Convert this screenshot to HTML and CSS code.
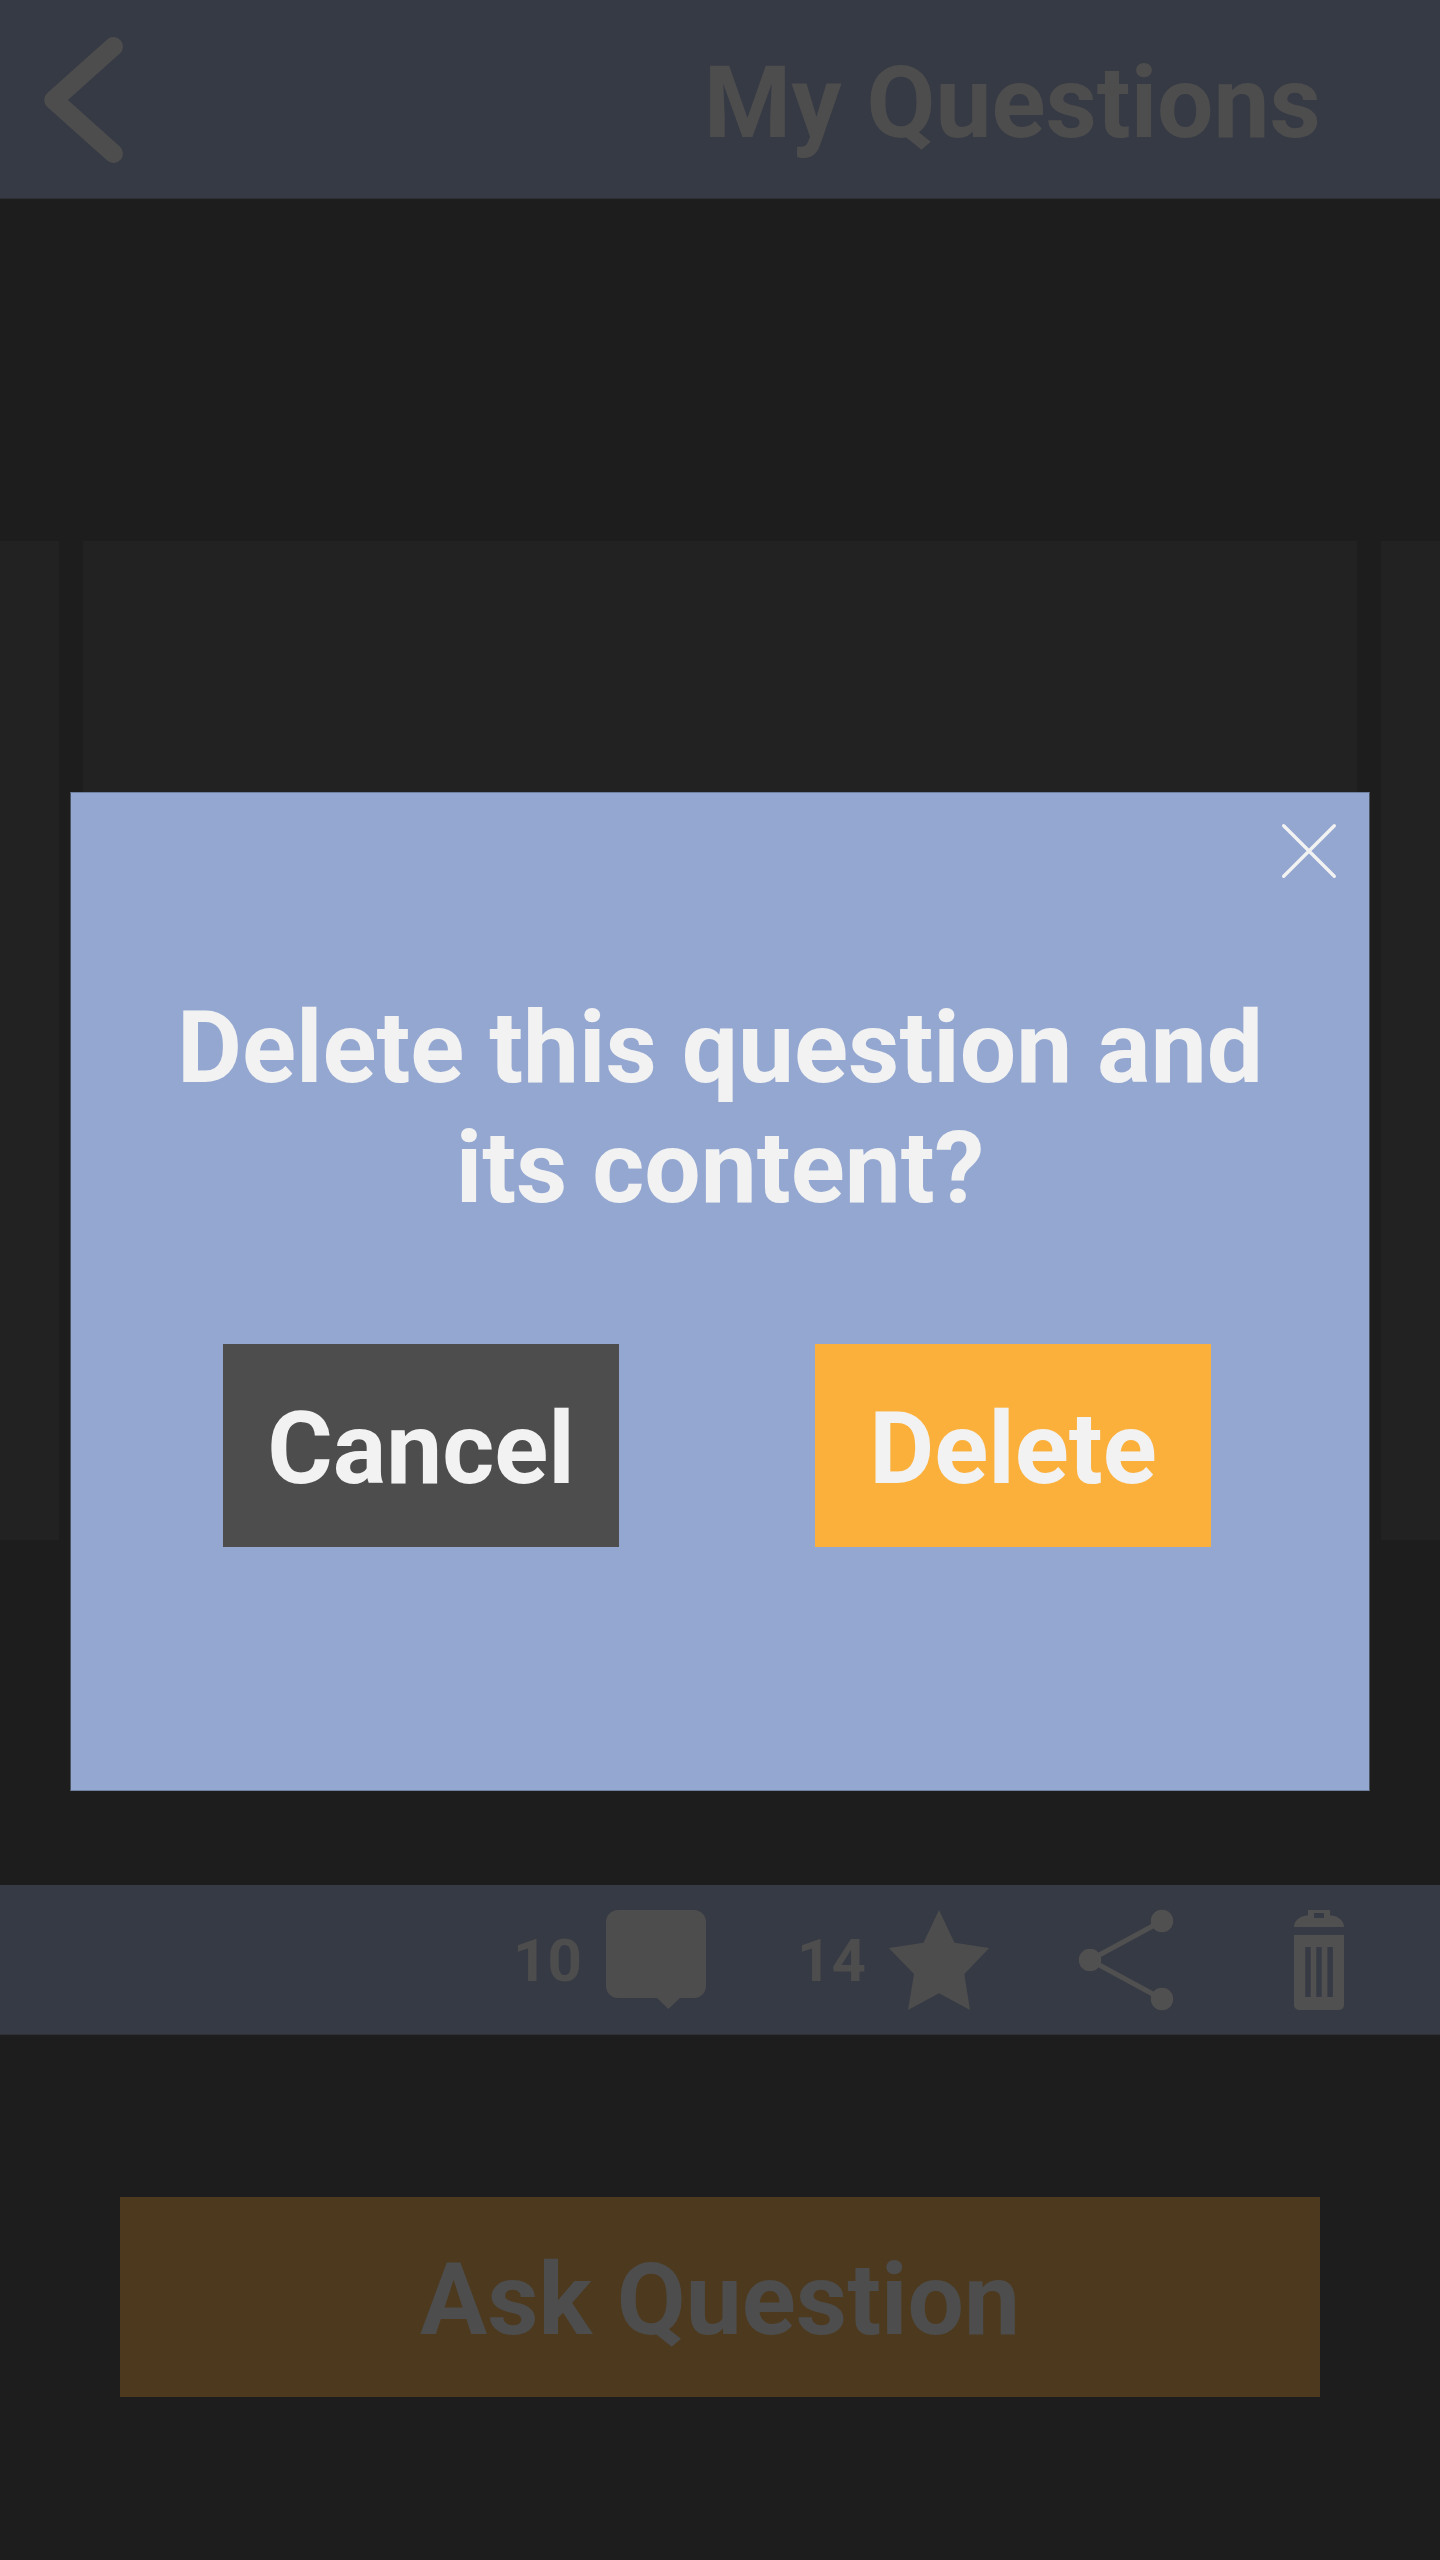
FILE: index.html
```html
<!DOCTYPE html>
<html lang="en">
<head>
<meta charset="utf-8">
<title>My Questions</title>
<link rel="stylesheet" href="styles.css">
</head>
<body>
<div class="app">
  <header class="header">
    <svg class="back" viewBox="0 0 80 128" aria-label="Back"><path d="M73.500 10.500 13.700 64l59.800 53.500"/></svg>
    <h1 class="title">My Questions</h1>
  </header>
  <main class="carousel">
    <div class="card"></div>
    <div class="card"></div>
    <div class="card"></div>
  </main>
  <nav class="actions">
    <span class="count">10</span>
    <svg class="icon comment" viewBox="0 0 100 100"><path d="M12 0H88A12 12 0 0 1 100 12V76A12 12 0 0 1 88 88H74L62.400 99 51 88H12A12 12 0 0 1 0 76V12A12 12 0 0 1 12 0Z"/></svg>
    <span class="count">14</span>
    <svg class="icon star" viewBox="0 0 100 100"><path d="M50 0 65.500 32.700 100.300 38 75.300 64 81 100 50 83.300 19 100 25 64 -.3 38 34.500 32.700Z"/></svg>
    <svg class="icon share" viewBox="0 0 100 100"><path d="M83 11 11 50l72 39"/><circle cx="83" cy="11" r="11.200"/><circle cx="11" cy="50" r="11.200"/><circle cx="83" cy="89" r="11.200"/></svg>
    <svg class="icon trash" viewBox="0 0 50 100"><path fill-rule="evenodd" d="M0 17A14 11.500 0 0 1 12 5.500H14V0H36V5.500H38A14 11.500 0 0 1 50 17ZM20 3V8H30V3ZM0 25H50V95A5 5 0 0 1 45 100H5A5 5 0 0 1 0 95ZM11.200 37V87H16.700V37ZM22.300 37V87H27.700V37ZM33.400 37V87H38.900V37Z"/></svg>
  </nav>
  <button class="ask">Ask Question</button>
  <section class="dialog" role="dialog">
    <svg class="close" viewBox="0 0 56 56" aria-label="Close"><path d="M2.700 2.700 53.300 53.300M53.300 2.700 2.700 53.300"/></svg>
    <p class="message">Delete this question and its content?</p>
    <div class="choices">
      <button class="choice cancel">Cancel</button>
      <button class="choice delete">Delete</button>
    </div>
  </section>
</div>
</body>
</html>
```
FILE: styles.css
```css
* {
  box-sizing: border-box;
}

body {
  margin: 0;
  background: #1d1d1d;
  font-family: Roboto, sans-serif;
  font-weight: 700;
}

button {
  padding: 0;
  border: 0;
  font: inherit;
}

.app {
  position: relative;
  display: flex;
  flex-direction: column;
  width: 1440px;
  height: 2560px;
  overflow: hidden;
  color: #4d4d4d;
}

.header {
  display: flex;
  align-items: center;
  justify-content: space-between;
  height: 199px;
  padding: 2px 119px 0 40px;
  background: #363a44;
  border-bottom: 1px solid #2e3036;
}

.back {
  width: 80px;
  height: 128px;
  overflow: visible;
  fill: none;
  stroke: #4d4d4d;
  stroke-width: 19;
  stroke-linecap: round;
  stroke-linejoin: round;
}

.title {
  margin: 4px 0 0;
  font-size: 100px;
  line-height: 117px;
}

.carousel {
  display: grid;
  grid-template-columns: 1274px 1274px 1274px;
  justify-content: center;
  gap: 24px;
  height: 999px;
  margin-top: 342px;
}

.card {
  background: #222;
}

.actions {
  display: flex;
  align-items: center;
  height: 150px;
  margin-top: 345px;
  padding-left: 513px;
  background: #363a44;
  border-bottom: 1px solid #2e3036;
}

.count {
  width: 70px;
  padding-top: 2px;
  font-size: 60px;
  line-height: 70px;
}

.icon {
  height: 100px;
  fill: #4d4d4d;
  overflow: visible;
}

.comment {
  width: 100px;
  margin: 0 91px 0 23px;
}

.star {
  width: 100px;
  margin: 0 90px 0 22px;
}

.share {
  width: 100px;
  margin-right: 115px;
  fill: #505050;
}

.share path {
  fill: none;
  stroke: #505050;
  stroke-width: 5;
}

.trash {
  width: 50px;
  fill: #505050;
}

.ask {
  width: 1200px;
  height: 200px;
  margin: 162px auto 0;
  padding-top: 4px;
  background: #4d3a1e;
  color: #4d4d4d;
  font-size: 100px;
}

.dialog {
  position: absolute;
  top: 792px;
  left: 70px;
  display: flex;
  flex-direction: column;
  width: 1300px;
  height: 999px;
  padding: 30px 32px 0;
  background: #93a7d1;
  border: 1px solid #4c5361;
  border-top-color: #7080a0;
  border-bottom-color: #7080a0;
  color: #f2f2f2;
}

.close {
  align-self: flex-end;
  width: 56px;
  height: 56px;
  fill: none;
  stroke: #f2f2f2;
  stroke-width: 3.4;
  stroke-linecap: round;
}

.message {
  width: 1120px;
  margin: 109px auto 0;
  font-size: 100px;
  line-height: 120px;
  text-align: center;
}

.choices {
  display: flex;
  justify-content: center;
  gap: 196px;
  margin-top: 116px;
  padding-right: 6px;
}

.choice {
  width: 396px;
  height: 203px;
  padding-top: 5px;
  color: #f2f2f2;
  font-size: 100px;
}

.cancel {
  background: #4d4d4d;
}

.delete {
  background: #fbb03b;
}
```
